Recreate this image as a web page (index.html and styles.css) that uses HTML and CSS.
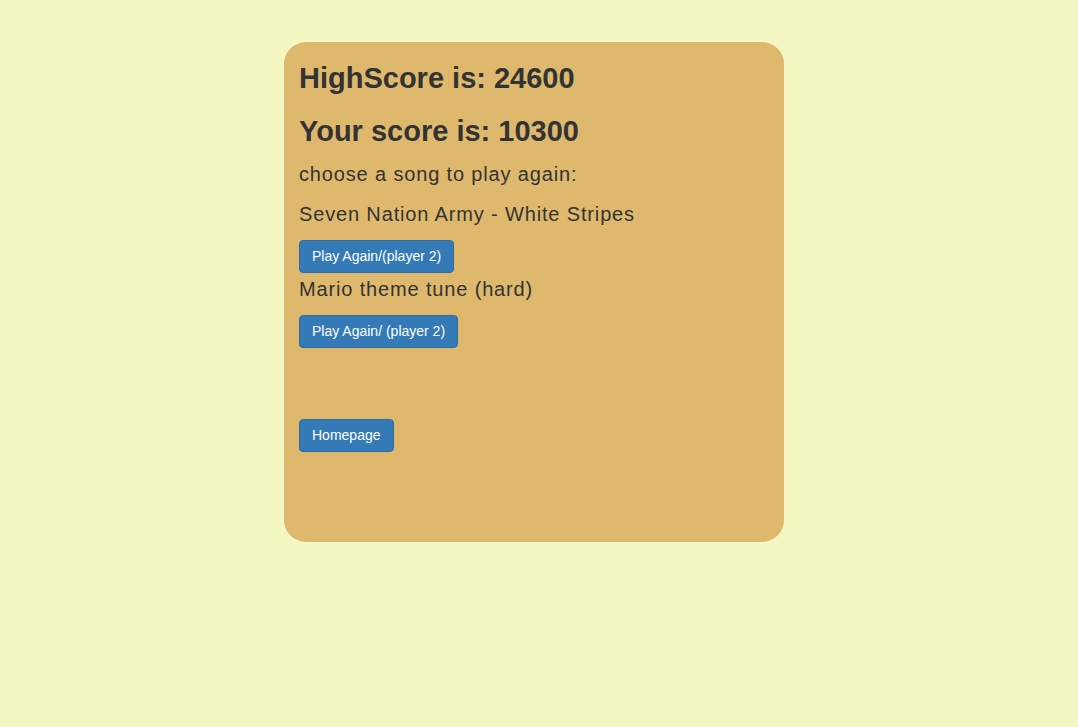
FILE: index.html
```html
<!DOCTYPE html>
<html lang="en">
<head>
<meta charset="utf-8">
<title>Game Over</title>
<link rel="stylesheet" href="styles.css">
</head>
<body>
  <main class="page">
    <section class="card">
      <h2 class="score score-high">HighScore is: 24600</h2>
      <h2 class="score score-yours">Your score is: 10300</h2>
      <p class="line line-choose">choose a song to play again:</p>
      <p class="line line-song">Seven Nation Army - White Stripes</p>
      <div class="btn-row btn-row-first"><button class="btn" type="button">Play Again/(player 2)</button></div>
      <p class="line line-song2">Mario theme tune (hard)</p>
      <div class="btn-row btn-row-second"><button class="btn" type="button">Play Again/ (player 2)</button></div>
      <div class="btn-row btn-row-home"><button class="btn" type="button">Homepage</button></div>
    </section>
  </main>
</body>
</html>
```

FILE: styles.css
```css
html, body {
  margin: 0;
  padding: 0;
}

body {
  background: #f4f7c1;
  color: #333333;
  font-family: "Liberation Sans", Arial, Helvetica, sans-serif;
  font-size: 14px;
  line-height: 20px;
  min-height: 727px;
}

.page {
  padding-top: 42px;
  padding-left: 284px;
}

.card {
  box-sizing: border-box;
  width: 500px;
  height: 500px;
  padding: 20px 15px 0;
  background: #deb96d;
  border-radius: 22px;
}

.score {
  margin: 0;
  font-size: 29px;
  line-height: 33px;
  font-weight: 700;
  color: #333333;
}

.score-yours {
  margin-top: 20px;
}

.line {
  margin: 0;
  font-size: 20px;
  line-height: 28px;
  letter-spacing: 0.85px;
  color: #333333;
}

.line-choose {
  margin-top: 12px;
}

.line-song {
  margin-top: 12px;
}

.line-song2 {
  margin-top: 2px;
}

.btn-row {
  display: flex;
}

.btn-row-first {
  margin-top: 12px;
}

.btn-row-second {
  margin-top: 12px;
}

.btn-row-home {
  margin-top: 71px;
}

.btn {
  display: inline-block;
  margin: 0;
  padding: 6px 12px;
  font-family: "Liberation Sans", Arial, Helvetica, sans-serif;
  font-size: 14px;
  line-height: 19px;
  font-weight: 400;
  color: #ffffff;
  background: #337ab7;
  border: 1px solid #2e6da4;
  border-radius: 4px;
  cursor: pointer;
  white-space: nowrap;
}
```
